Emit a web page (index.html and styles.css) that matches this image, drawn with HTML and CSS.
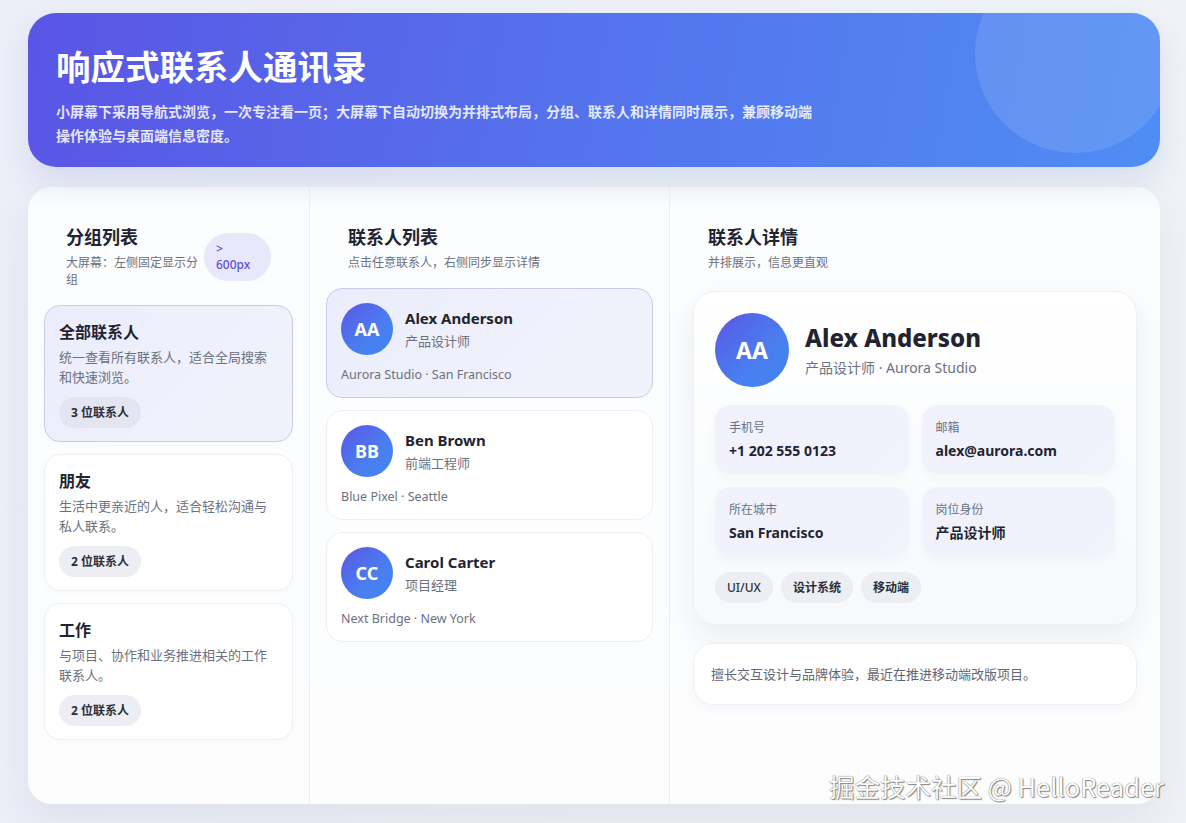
FILE: index.html
```html
<!DOCTYPE html>
<html lang="zh-CN">
<head>
<meta charset="utf-8">
<title>响应式联系人通讯录</title>
<link rel="stylesheet" href="styles.css">
</head>
<body>
<div class="page">
  <header class="hero">
    <div class="hero-circle"></div>
    <h1 class="hero-title">响应式联系人通讯录</h1>
    <p class="hero-desc">小屏幕下采用导航式浏览，一次专注看一页；大屏幕下自动切换为并排式布局，分组、联系人和详情同时展示，兼顾移动端操作体验与桌面端信息密度。</p>
  </header>

  <main class="board">
    <section class="col col-groups">
      <div class="col-head">
        <div class="col-head-text">
          <h2 class="col-title">分组列表</h2>
          <p class="col-sub">大屏幕：左侧固定显示分组</p>
        </div>
        <span class="size-badge">&gt; 600px</span>
      </div>
      <div class="stack">
        <div class="group-card is-active">
          <h3 class="group-title">全部联系人</h3>
          <p class="group-desc">统一查看所有联系人，适合全局搜索和快速浏览。</p>
          <span class="count-pill">3 位联系人</span>
        </div>
        <div class="group-card">
          <h3 class="group-title">朋友</h3>
          <p class="group-desc">生活中更亲近的人，适合轻松沟通与私人联系。</p>
          <span class="count-pill">2 位联系人</span>
        </div>
        <div class="group-card">
          <h3 class="group-title">工作</h3>
          <p class="group-desc">与项目、协作和业务推进相关的工作联系人。</p>
          <span class="count-pill">2 位联系人</span>
        </div>
      </div>
    </section>

    <section class="col col-contacts">
      <div class="col-head">
        <div class="col-head-text">
          <h2 class="col-title">联系人列表</h2>
          <p class="col-sub">点击任意联系人，右侧同步显示详情</p>
        </div>
      </div>
      <div class="stack">
        <div class="contact-card is-active">
          <div class="contact-top">
            <div class="avatar">AA</div>
            <div class="contact-info">
              <div class="contact-name">Alex Anderson</div>
              <div class="contact-role">产品设计师</div>
            </div>
          </div>
          <div class="contact-meta">Aurora Studio · San Francisco</div>
        </div>
        <div class="contact-card">
          <div class="contact-top">
            <div class="avatar">BB</div>
            <div class="contact-info">
              <div class="contact-name">Ben Brown</div>
              <div class="contact-role">前端工程师</div>
            </div>
          </div>
          <div class="contact-meta">Blue Pixel · Seattle</div>
        </div>
        <div class="contact-card">
          <div class="contact-top">
            <div class="avatar">CC</div>
            <div class="contact-info">
              <div class="contact-name">Carol Carter</div>
              <div class="contact-role">项目经理</div>
            </div>
          </div>
          <div class="contact-meta">Next Bridge · New York</div>
        </div>
      </div>
    </section>

    <section class="col col-detail">
      <div class="col-head">
        <div class="col-head-text">
          <h2 class="col-title">联系人详情</h2>
          <p class="col-sub">并排展示，信息更直观</p>
        </div>
      </div>
      <div class="detail-body">
        <div class="detail-card">
          <div class="detail-top">
            <div class="avatar avatar-lg">AA</div>
            <div>
              <div class="detail-name">Alex Anderson</div>
              <div class="detail-sub">产品设计师 · Aurora Studio</div>
            </div>
          </div>
          <div class="info-grid">
            <div class="info-box">
              <div class="info-label">手机号</div>
              <div class="info-value">+1 202 555 0123</div>
            </div>
            <div class="info-box">
              <div class="info-label">邮箱</div>
              <div class="info-value">alex@aurora.com</div>
            </div>
            <div class="info-box">
              <div class="info-label">所在城市</div>
              <div class="info-value">San Francisco</div>
            </div>
            <div class="info-box">
              <div class="info-label">岗位身份</div>
              <div class="info-value">产品设计师</div>
            </div>
          </div>
          <div class="tags">
            <span class="tag">UI/UX</span>
            <span class="tag">设计系统</span>
            <span class="tag">移动端</span>
          </div>
        </div>
        <div class="bio-card">擅长交互设计与品牌体验，最近在推进移动端改版项目。</div>
      </div>
    </section>
  </main>
</div>
<div class="watermark">掘金技术社区 @ HelloReader</div>
</body>
</html>
```

FILE: styles.css
```css
* { box-sizing: border-box; }

html, body {
  margin: 0;
  padding: 0;
}

body {
  font-family: "Noto Sans", "Noto Sans CJK SC", sans-serif;
  color: #1f2430;
  background: linear-gradient(90deg, #eceef8 0%, #eef1f6 50%, #eff2f6 100%);
  min-height: 823px;
  position: relative;
  overflow: hidden;
}

.page {
  padding: 13px 26px 0 28px;
  display: flex;
  flex-direction: column;
  gap: 20px;
}

/* ---------- hero ---------- */
.hero {
  position: relative;
  overflow: hidden;
  border-radius: 28px;
  padding: 31px 28px 19px;
  height: 154px;
  background: linear-gradient(100deg, #5a55e5 0%, #5570ec 45%, #4f8df4 100%);
  box-shadow: 0 14px 30px rgba(80, 100, 200, 0.14);
  color: #fff;
}

.hero-circle {
  position: absolute;
  width: 200px;
  height: 200px;
  border-radius: 50%;
  right: -15px;
  top: -60px;
  background: rgba(255, 255, 255, 0.11);
}

.hero-title {
  position: relative;
  margin: 0 0 10px;
  font-size: 34.5px;
  line-height: 46px;
  font-weight: 700;
  letter-spacing: 0;
}

.hero-desc {
  position: relative;
  margin: 0;
  max-width: 762px;
  font-size: 14px;
  line-height: 24px;
  font-weight: 600;
  color: rgba(255, 255, 255, 0.86);
}

/* ---------- board ---------- */
.board {
  height: 617px;
  background: #fdfdfe;
  border-radius: 24px;
  box-shadow: 0 18px 44px rgba(40, 50, 90, 0.07);
  display: grid;
  grid-template-columns: 282px 360px 1fr;
  overflow: hidden;
}

.col {
  padding: 16px;
  background: linear-gradient(180deg, #f8f9fb 0px, #fcfdfe 22px, #fdfdfe 100%);
}

.col-groups,
.col-contacts {
  border-right: 1px solid #eceef3;
}

.col-head {
  display: flex;
  align-items: center;
  gap: 4px;
  padding: 22px 22px 17px;
}

.col-head-text {
  flex: 1;
  min-width: 0;
}

.col-title {
  margin: 0 0 4px;
  font-size: 18px;
  line-height: 25px;
  font-weight: 700;
  color: #1f2430;
}

.col-sub {
  margin: 0;
  font-size: 12px;
  line-height: 17px;
  color: #6b7180;
}

.size-badge {
  flex: none;
  width: 67px;
  padding: 8px 12px;
  border-radius: 999px;
  background: #e9e8fb;
  color: #5a4fd6;
  font-size: 12px;
  line-height: 16px;
  font-weight: 500;
}

.stack {
  display: flex;
  flex-direction: column;
  gap: 12px;
}

/* ---------- group cards ---------- */
.group-card {
  border: 1px solid #eef0f4;
  border-radius: 16px;
  background: #fff;
  padding: 15px 14px 13px;
  height: 137px;
  box-shadow: 0 2px 8px rgba(30, 40, 80, 0.02);
}

.group-card.is-active {
  background: linear-gradient(135deg, #ecedfc 0%, #f1f3fb 100%);
  border-color: #c9cbee;
}

.group-title {
  margin: 0 0 4px;
  font-size: 16px;
  line-height: 22px;
  font-weight: 700;
  color: #1f2430;
}

.group-desc {
  margin: 0 0 10px;
  font-size: 13px;
  line-height: 20px;
  color: #6b7180;
}

.count-pill {
  display: inline-block;
  padding: 7px 12px;
  border-radius: 999px;
  background: #eceef3;
  font-size: 12px;
  line-height: 17px;
  font-weight: 700;
  color: #2a2f3a;
}

.group-card.is-active .count-pill {
  background: #e3e5f1;
}

/* ---------- contact cards ---------- */
.contact-card {
  border: 1px solid #eef0f4;
  border-radius: 16px;
  background: #fff;
  padding: 14px 14px 13px;
  height: 110px;
}

.contact-card.is-active {
  background: linear-gradient(135deg, #ecedfc 0%, #f1f3fb 100%);
  border-color: #c9cbee;
}

.contact-top {
  display: flex;
  align-items: center;
  gap: 12px;
}

.avatar {
  flex: none;
  width: 52px;
  height: 52px;
  border-radius: 50%;
  background: linear-gradient(135deg, #5a57e5 0%, #4a7ef0 60%, #3f86ef 100%);
  color: #fff;
  display: flex;
  align-items: center;
  justify-content: center;
  font-size: 18px;
  font-weight: 700;
}

.contact-name {
  font-size: 15px;
  line-height: 22px;
  font-weight: 700;
  color: #1f2430;
}

.contact-role {
  margin-top: 2px;
  font-size: 13px;
  line-height: 20px;
  color: #6b7180;
}

.contact-meta {
  margin-top: 11px;
  font-size: 12.5px;
  line-height: 18px;
  color: #6b7180;
}

/* ---------- detail ---------- */
.detail-body {
  padding: 3px 7px 0;
  display: flex;
  flex-direction: column;
  gap: 18px;
}

.detail-card {
  border: 1px solid #edf0f5;
  border-radius: 22px;
  background: linear-gradient(180deg, #ffffff 0%, #f7f9fd 100%);
  padding: 21px;
  box-shadow: 0 12px 30px rgba(30, 40, 90, 0.08);
}

.detail-top {
  display: flex;
  align-items: center;
  gap: 16px;
}

.avatar-lg {
  width: 74px;
  height: 74px;
  font-size: 23px;
}

.detail-name {
  font-size: 24px;
  line-height: 32px;
  font-weight: 800;
  color: #1f2430;
}

.detail-sub {
  margin-top: 4px;
  font-size: 14px;
  line-height: 20px;
  color: #6b7180;
}

.info-grid {
  margin-top: 18px;
  display: grid;
  grid-template-columns: 1fr 1fr;
  gap: 13px;
}

.info-box {
  border-radius: 16px;
  background: linear-gradient(135deg, #f0f1fc 0%, #f1f3fb 100%);
  padding: 14px 14px 13px;
  height: 69px;
  box-shadow: 0 4px 12px rgba(30, 40, 90, 0.03);
}

.info-label {
  font-size: 12px;
  line-height: 18px;
  color: #6b7180;
}

.info-value {
  margin-top: 4px;
  font-size: 14px;
  line-height: 20px;
  font-weight: 700;
  color: #1f2430;
}

.tags {
  margin-top: 16px;
  display: flex;
  gap: 8px;
}

.tag {
  padding: 7px 12px;
  border-radius: 999px;
  background: #eceef3;
  font-size: 12px;
  line-height: 17px;
  font-weight: 700;
  color: #2a2f3a;
}

.tag:first-child {
  font-weight: 500;
}

.bio-card {
  border: 1px solid #eef0f4;
  border-radius: 20px;
  background: #fff;
  padding: 19px 17px;
  font-size: 13px;
  line-height: 22px;
  color: #5f6572;
  box-shadow: 0 4px 14px rgba(30, 40, 90, 0.03);
}

/* ---------- watermark ---------- */
.watermark {
  position: absolute;
  right: 22px;
  bottom: 21px;
  font-family: "Noto Sans CJK SC", "Noto Sans", sans-serif;
  font-size: 25.5px;
  line-height: 32px;
  color: #ffffff;
  text-shadow: 0 0 1px #444, 1px 1px 1px rgba(0, 0, 0, 0.45);
  letter-spacing: 0;
}
```
